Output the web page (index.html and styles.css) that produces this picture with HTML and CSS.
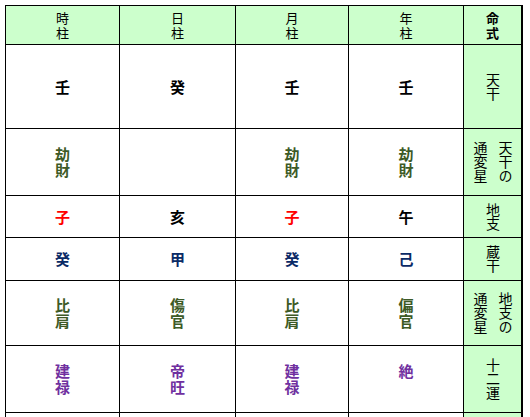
FILE: index.html
```html
<!DOCTYPE html>
<html lang="ja">
<head>
<meta charset="utf-8">
<title>命式</title>
<link rel="stylesheet" href="styles.css">
</head>
<body>
<div class="wrap">
<table class="meishiki">
  <tr class="r-head">
    <th class="c1">時<br>柱</th>
    <th class="c2">日<br>柱</th>
    <th class="c3">月<br>柱</th>
    <th class="c4">年<br>柱</th>
    <th class="c5 title">命<br>式</th>
  </tr>
  <tr class="r1">
    <td class="k">壬</td>
    <td class="k">癸</td>
    <td class="k">壬</td>
    <td class="k">壬</td>
    <td class="lab"><span class="v">天干</span></td>
  </tr>
  <tr class="r2">
    <td class="g">劫<br>財</td>
    <td></td>
    <td class="g">劫<br>財</td>
    <td class="g">劫<br>財</td>
    <td class="lab"><span class="v">天干の通変星</span></td>
  </tr>
  <tr class="r3">
    <td class="red">子</td>
    <td class="k">亥</td>
    <td class="red">子</td>
    <td class="k">午</td>
    <td class="lab"><span class="v">地支</span></td>
  </tr>
  <tr class="r4">
    <td class="navy">癸</td>
    <td class="navy">甲</td>
    <td class="navy">癸</td>
    <td class="navy">己</td>
    <td class="lab"><span class="v">蔵干</span></td>
  </tr>
  <tr class="r5">
    <td class="g">比<br>肩</td>
    <td class="g">傷<br>官</td>
    <td class="g">比<br>肩</td>
    <td class="g">偏<br>官</td>
    <td class="lab"><span class="v">地支の通変星</span></td>
  </tr>
  <tr class="r6">
    <td class="pu">建<br>禄</td>
    <td class="pu">帝<br>旺</td>
    <td class="pu">建<br>禄</td>
    <td class="pu">絶<br>&#12288;</td>
    <td class="lab"><span class="v">十二運</span></td>
  </tr>
  <tr class="r7">
    <td></td>
    <td></td>
    <td></td>
    <td></td>
    <td class="lab"></td>
  </tr>
</table>
</div>
</body>
</html>
```
FILE: styles.css
```css
html, body {
  margin: 0;
  padding: 0;
  background: #ffffff;
}
.wrap {
  padding: 5px 0 0 5px;
}
.meishiki {
  border-collapse: separate;
  border-spacing: 0;
  table-layout: fixed;
  border-top: 1px solid #000;
  border-left: 1px solid #000;
  font-family: "Noto Sans CJK JP", sans-serif;
  color: #000;
}
.meishiki th,
.meishiki td {
  box-sizing: border-box;
  padding: 0;
  border-right: 1px solid #000;
  border-bottom: 1px solid #000;
  text-align: center;
  vertical-align: middle;
  font-size: 15px;
  line-height: 16px;
  font-weight: bold;
}
.meishiki th {
  background: #ccffcc;
  font-size: 13px;
  line-height: 15px;
  font-weight: normal;
}
.meishiki th.title {
  font-weight: bold;
}
.c1 { width: 114px; }
.c2 { width: 116px; }
.c3 { width: 113px; }
.c4 { width: 115px; }
.meishiki th.c5 { width: 59px; border-right-width: 2px; }
.meishiki td.lab {
  background: #ccffcc;
  border-right-width: 2px;
  font-weight: normal;
  font-size: 14px;
  line-height: 14px;
}
.v {
  display: inline-block;
  writing-mode: vertical-rl;
  line-height: 25px;
  max-height: 43px;
  font-size: 14px;
  font-weight: normal;
  vertical-align: middle;
}
.k { color: #000000; }
.g { color: #3d5a26; }
.red { color: #ff0000; }
.navy { color: #0a2a66; }
.pu { color: #7030a0; }
.r-head { height: 39px; }
.r1 { height: 84px; }
.r2 { height: 67px; }
.r3 { height: 42px; }
.r4 { height: 43px; }
.r5 { height: 65px; }
.r6 { height: 67px; }
.r7 { height: 67px; }
```
